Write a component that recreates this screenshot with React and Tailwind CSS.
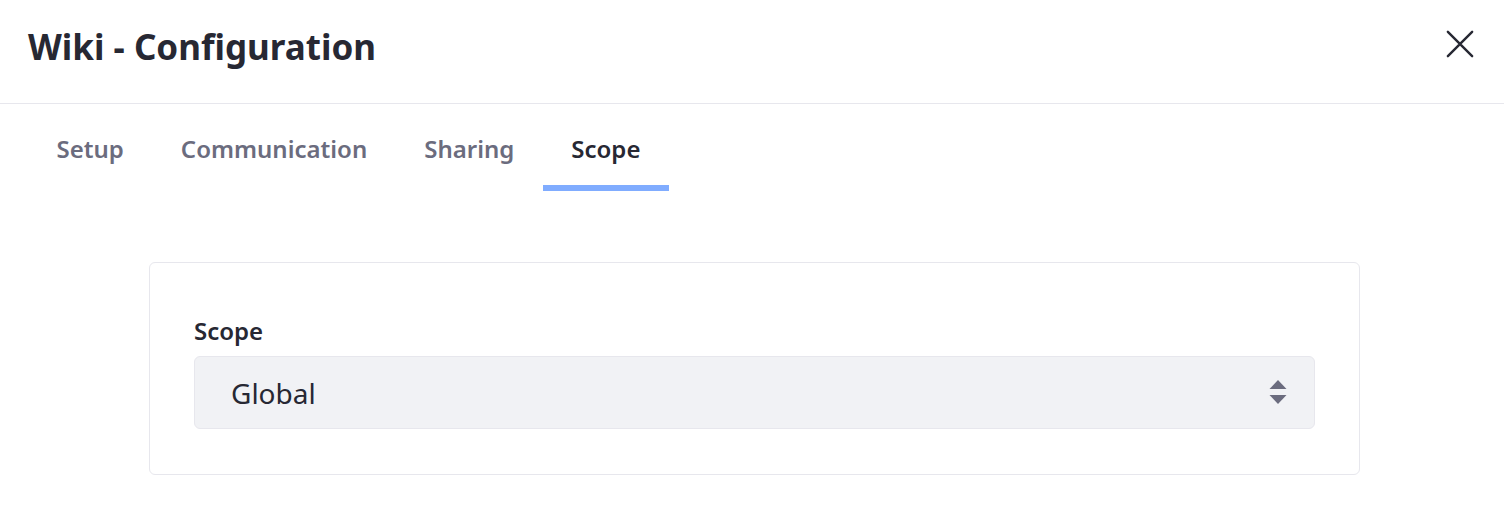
const tabs = ["Setup", "Communication", "Sharing", "Scope"];

function SortIcon() {
  return (
    <svg width="18" height="26" viewBox="0 0 18 26" className="text-[#6b6c7e]">
      <path d="M9 0 L17.5 9 L0.5 9 Z" fill="currentColor" />
      <path d="M0.5 15 L17.5 15 L9 24 Z" fill="currentColor" />
    </svg>
  );
}

export default function App() {
  return (
    <div
      className="h-[513px] w-[1504px] bg-white text-[#272833]"
      style={{ fontFamily: '"Noto Sans", "Open Sans", sans-serif' }}
    >
      <header className="flex h-[104px] items-center justify-between border-b border-[#e7e7ed] pb-[10px] pl-[28px] pr-[30px]">
        <h1 className="text-[35px] font-bold leading-none">Wiki - Configuration</h1>
        <button className="mb-[6px] flex h-[28px] w-[28px] items-center justify-center text-[#272833]">
          <svg width="30" height="30" viewBox="0 0 30 30">
            <path d="M2 2 L28 28 M28 2 L2 28" stroke="currentColor" strokeWidth="2.6" strokeLinecap="round" />
          </svg>
        </button>
      </header>

      <nav className="flex pl-[28px]">
        {tabs.map((t) => (
          <div
            key={t}
            className={`flex h-[87px] flex-col justify-between ${t === "Scope" ? "text-[#272833]" : "text-[#6b6c7e]"}`}
          >
            <span className="px-[28.5px] pt-[27px] text-[24px] font-semibold leading-[36px]">{t}</span>
            <span className={`h-[6px] w-full ${t === "Scope" ? "bg-[#80acff]" : ""}`} />
          </div>
        ))}
      </nav>

      <div className="ml-[149px] mt-[71px] w-[1211px] rounded-[6px] border border-[#e7e7ed] px-[44px] pb-[45px] pt-[50px]">
        <label className="block text-[24px] font-semibold leading-[36px]">Scope</label>
        <div className="mt-[7px] flex h-[73px] items-center justify-between rounded-[6px] border border-[#e7e7ed] bg-[#f1f2f5] pl-[36px] pr-[27px]">
          <span className="text-[28px] leading-none">Global</span>
          <SortIcon />
        </div>
      </div>
    </div>
  );
}
